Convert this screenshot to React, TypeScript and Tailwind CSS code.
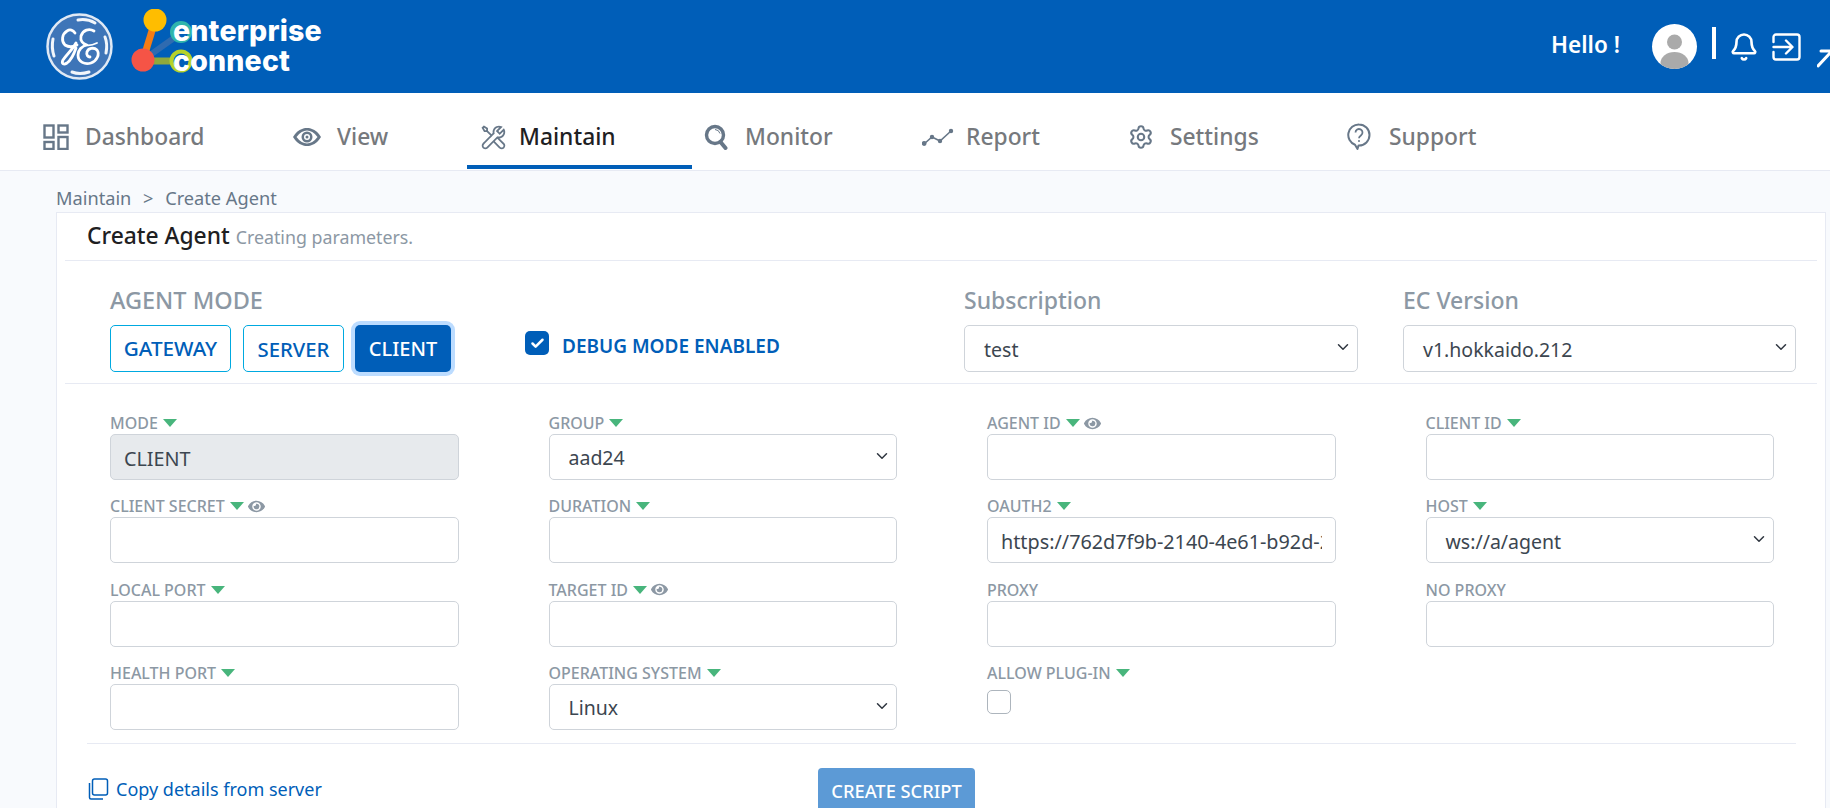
import React from "react";
import { Settings, Bell, ChevronDown, Check } from "lucide-react";
import { FaEye } from "react-icons/fa";
import { LiaToolsSolid } from "react-icons/lia";

const Caret = () => <span className="inline-block ml-[5px] w-0 h-0 border-l-[7.5px] border-r-[7.5px] border-t-[8px] border-l-transparent border-r-transparent border-t-[#48b57c]" />;

const DashboardIcon = () => (
  <svg width="26" height="26" viewBox="0 0 26 26" fill="none" stroke="#677788" strokeWidth="2.4">
    <rect x="1.5" y="1.5" width="9" height="12" /><rect x="15.5" y="1.5" width="9" height="7" />
    <rect x="1.5" y="18" width="9" height="7" /><rect x="15.5" y="13" width="9" height="12" />
  </svg>
);
const ViewIcon = () => (
  <svg width="30" height="20" viewBox="0 0 30 20" fill="none">
    <path d="M1 10C5 3.500 10 1 15 1s10 2.500 14 9c-4 6.500-9 9-14 9S5 16.500 1 10Z" fill="#677788" />
    <path d="M4.500 10C8 5.500 11.500 3.500 15 3.500S22 5.500 25.500 10C22 14.500 18.500 16.500 15 16.500S8 14.500 4.500 10Z" fill="#fff" />
    <circle cx="15" cy="10" r="5.500" fill="#677788" /><circle cx="15" cy="10" r="3" fill="#fff" /><circle cx="15" cy="10" r="1.500" fill="#677788" />
  </svg>
);
const MonitorIcon = () => (
  <svg width="24" height="26" viewBox="0 0 24 26" fill="none">
    <circle cx="11" cy="11" r="8.500" stroke="#677788" strokeWidth="3.400" />
    <path d="M16.500 18l5 6" stroke="#677788" strokeWidth="4" strokeLinecap="round" />
    <path d="M11 5.500a5.500 5.500 0 0 1 5 4" stroke="#677788" strokeWidth="1" />
  </svg>
);
const ReportIcon = () => (
  <svg width="32" height="18" viewBox="0 0 32 18" fill="#677788" stroke="#677788" strokeWidth="1.600">
    <path d="M2 16l8-7 8 4 11-10" fill="none" />
    <circle cx="2.200" cy="15.500" r="1.600" /><circle cx="10" cy="9" r="1.400" /><circle cx="18" cy="13" r="1.400" /><circle cx="29" cy="3" r="1.400" />
  </svg>
);
const SupportIcon = () => (
  <svg width="24" height="28" viewBox="0 0 24 28" fill="none" stroke="#677788" strokeWidth="2">
    <path d="M12 1.500a10.500 10.500 0 0 1 0 21h-.500l-1 3.500-2.500-4.200A10.500 10.500 0 0 1 12 1.500Z" strokeLinejoin="round" />
    <path d="M8.500 9.500a3.500 3.500 0 1 1 5.600 2.800c-1.300 1-2.100 1.500-2.100 3" strokeWidth="1.800" />
    <circle cx="12" cy="18" r=".6" fill="#677788" strokeWidth="1" />
  </svg>
);
const EnterIcon = () => (
  <svg width="29" height="28" viewBox="0 0 29 28" fill="none" stroke="#fff" strokeWidth="2.400" strokeLinecap="round" strokeLinejoin="round">
    <path d="M1.500 9V4a2.500 2.500 0 0 1 2.500-2.500h21A2.500 2.500 0 0 1 27.500 4v20a2.500 2.500 0 0 1-2.500 2.500H4A2.500 2.500 0 0 1 1.500 24v-5" />
    <path d="M1.500 14H20M14 7.500l6.500 6.500-6.500 6.500" />
  </svg>
);
const CopyIcon = () => (
  <svg width="22" height="22" viewBox="0 0 22 22" fill="none" stroke="#005eb8" strokeWidth="1.500">
    <rect x="5.500" y="1" width="15" height="16" rx="2" />
    <path d="M2.500 5v14.500a1.500 1.500 0 0 0 1.500 1.500h12" />
  </svg>
);
const GeLogo = () => (
  <svg width="67" height="67" viewBox="0 0 67 67" fill="none" stroke="#fff" strokeLinecap="round" strokeLinejoin="round">
    <circle cx="33.500" cy="33.500" r="32" fill="#3e75b8" stroke="#dfe9f5" strokeWidth="2.500" />
    <g strokeWidth="2.800">
      <path d="M29 20c-2-3-5-4-8-2-5 3-6 10-2 14 3 2 8 2 12 0" />
      <path d="M30 30c-3 6-9 11-13 17-2 4 1 5 4 3 4-3 7-9 9-15" />
      <path d="M48 18c-5-3-11-1-13 5-1 5 2 8 6 9-5 1-9 5-9 10 0 7 7 10 13 8 6-2 9-9 6-13-3-3-9-2-10 2-1 3 1 5 3 5" />
      <path d="M39 32c4 1 8 0 12-2" strokeWidth="1.800" />
    </g>
    <g strokeWidth="3" stroke="#f2f6fb">
      <path d="M32 7c6-1 12 0 17 3" /><path d="M59 24c2 5 2 11 1 16" /><path d="M43 59c-6 2-12 2-17 0" /><path d="M8 43c-2-6-2-12-1-17" />
    </g>
  </svg>
);
const EcLogo = () => (
  <div className="relative w-[200px] h-[70px] shrink-0">
    <svg className="absolute left-0 top-0" width="80" height="70" viewBox="0 0 80 70" fill="none">
      <path d="M18 51L30 12" stroke="#f57c14" strokeWidth="7" />
      <path d="M18 51L56 24" stroke="#2f6bb0" strokeWidth="6" />
      <path d="M18 52H56" stroke="#8ea83c" strokeWidth="7" />
      <circle cx="30" cy="11" r="11.500" fill="#ffbd00" />
      <circle cx="18" cy="51" r="11.500" fill="#f55446" />
      <circle cx="56" cy="23" r="9" stroke="#2fb5ac" strokeWidth="4" fill="#005eb8" />
      <circle cx="56" cy="52" r="9.500" stroke="#b5d22a" strokeWidth="4" fill="#005eb8" />
    </svg>
    <div className="absolute left-[48px] top-[7px] text-white font-['Inter',sans-serif] font-extrabold text-[28.500px] leading-[29px] tracking-[0.2px]">enterprise</div>
    <div className="absolute left-[48px] top-[37px] text-white font-['Inter',sans-serif] font-extrabold text-[28.500px] leading-[29px] tracking-[0.2px]">connect</div>
  </div>
);

const tabs: { t: string; ic: React.ReactNode; active?: boolean; w: string; iw: string }[] = [
  { t: "Dashboard", ic: <DashboardIcon />, w: "w-[249px]", iw: "w-[42px]" },
  { t: "View", ic: <ViewIcon />, w: "w-[187px]", iw: "w-[45px]" },
  { t: "Maintain", ic: <LiaToolsSolid size={29} color="#677788" />, active: true, w: "w-[225px]", iw: "w-[40px]" },
  { t: "Monitor", ic: <MonitorIcon />, w: "w-[218px]", iw: "w-[41px]" },
  { t: "Report", ic: <ReportIcon />, w: "w-[206px]", iw: "w-[44px]" },
  { t: "Settings", ic: <Settings size={26} color="#677788" strokeWidth={1.900} />, w: "w-[219px]", iw: "w-[42px]" },
  { t: "Support", ic: <SupportIcon />, w: "w-[219px]", iw: "w-[42px]" },
];

const Label = ({ text, caret = true, eye }: { text: string; caret?: boolean; eye?: boolean }) => (
  <div className="h-[22px] flex items-center text-[16px] font-medium text-[#8c98a4] whitespace-nowrap leading-none">
    {text}{caret && <Caret />}{eye && <FaEye className="ml-[4px] text-[#8c98a4]" size={17} />}
  </div>
);
const inputCls = "block w-full h-[46px] border border-[#cfd4da] rounded-[5px] px-[13px] pt-[3px] text-[19.800px] text-[#3c4650] outline-none";
const Field = ({ label, caret, eye, value, disabled }: { label: string; caret?: boolean; eye?: boolean; value?: string; disabled?: boolean }) => (
  <div>
    <Label text={label} caret={caret} eye={eye} />
    <input readOnly disabled={disabled} defaultValue={value} className={inputCls + (disabled ? " bg-[#e7eaed]" : " bg-white")} />
  </div>
);
const Sel = ({ value, cls = "" }: { value: string; cls?: string }) => (
  <div className={"relative " + cls}>
    <div className="h-[46px] border border-[#cfd4da] rounded-[5px] bg-white pl-[19px] pt-[2px] flex items-center text-[19.500px] text-[#3c4650] whitespace-nowrap">{value}</div>
    <ChevronDown className="absolute right-[6px] top-[13px] text-[#2f3640]" size={18} strokeWidth={2} />
  </div>
);
const SelField = ({ label, value }: { label: string; value: string }) => (
  <div><Label text={label} /><Sel value={value} /></div>
);

export default function App() {
  return (
    <div className="w-[1830px] h-[808px] overflow-hidden bg-[#f8fafd] font-['Noto_Sans',sans-serif]">
      <header className="h-[93px] bg-[#005eb8] flex items-center pl-[46px] text-white">
        <GeLogo />
        <div className="ml-[12px] -mt-[6px]"><EcLogo /></div>
        <div className="ml-auto flex items-center w-[279px] shrink-0 overflow-hidden">
          <span className="text-[22.500px] font-semibold w-[101px] shrink-0 -mt-[3px] whitespace-nowrap">Hello !</span>
          <span className="w-[45px] h-[45px] rounded-full bg-white overflow-hidden shrink-0">
            <svg width="45" height="45" viewBox="0 0 45 45" fill="#aaa"><circle cx="22.500" cy="18" r="7.500" /><ellipse cx="22.500" cy="39" rx="14" ry="11" /></svg>
          </span>
          <span className="w-[4px] h-[32px] bg-white ml-[15px] mr-[15px] -mt-[8px] shrink-0" />
          <Bell size={30} strokeWidth={2.100} className="shrink-0 -ml-[2px] mt-[1px]" />
          <span className="ml-[13px] shrink-0 mt-[1px]"><EnterIcon /></span>
          <svg className="ml-[16px] shrink-0 mt-[22px]" width="24" height="20" viewBox="0 0 24 20" fill="none" stroke="#fff" strokeWidth="3" strokeLinecap="round"><path d="M1 18L14 4M4 3h20" /></svg>
        </div>
      </header>
      <nav className="h-[78px] bg-white border-b border-[#e7eaf3] flex pl-[31px]">
        {tabs.map(({ t, ic, active, w, iw }) => (
          <div key={t} className={"h-[76px] flex items-center pt-[16px] pl-[12px] border-b-[4px] shrink-0 " + w + " " + (active ? "border-[#005eb8]" : "border-transparent")}>
            <span className={"flex justify-start shrink-0 " + iw}>{ic}</span>
            <span className={"text-[22.800px] font-medium leading-none " + (active ? "text-[#1e2022]" : "text-[#76797d]")}>{t}</span>
          </div>
        ))}
      </nav>
      <div className="pl-[56px] pr-[4px]">
        <div className="h-[41px] pt-[15px] text-[18.200px] leading-[24px] text-[#677788] whitespace-nowrap">Maintain <span className="mx-[7px]">&gt;</span> Create Agent</div>
        <div className="bg-white border border-[#e7eaf3] h-[600px] pl-[8px] pr-[8px]">
          <div className="h-[48px] border-b border-[#e7eaf3] pl-[22px] flex items-center whitespace-nowrap">
            <span className="text-[22.800px] font-medium text-[#1e2022]">Create Agent</span>
            <span className="text-[17.800px] text-[#8c98a4] ml-[6px] mt-[2px]">Creating parameters.</span>
          </div>
          <div className="h-[123px] border-b border-[#e7eaf3] pl-[45px] flex items-start">
            <div className="w-[415px] shrink-0 pt-[24px]">
              <div className="text-[23.500px] font-medium text-[#8c98a4] leading-[30px] mb-[10px] whitespace-nowrap">AGENT MODE</div>
              <div className="flex">
                <button className="w-[121px] h-[47px] pt-[1px] border border-[#00a9e0] rounded-[5px] text-[20.700px] font-medium text-[#005eb8]">GATEWAY</button>
                <button className="ml-[12px] w-[101px] h-[47px] pt-[1px] border border-[#00a9e0] rounded-[5px] text-[20.300px] font-medium text-[#005eb8]">SERVER</button>
                <button className="ml-[11px] w-[96px] h-[47px] pt-[1px] rounded-[5px] text-[20px] font-medium text-white bg-[#005eb8] ring-4 ring-[#bcdcff]">CLIENT</button>
              </div>
            </div>
            <div className="w-[439px] shrink-0 pt-[70px] flex items-start">
              <span className="w-[24px] h-[24px] rounded-[5px] bg-[#005eb8] flex items-center justify-center"><Check size={15} color="#fff" strokeWidth={4} /></span>
              <span className="ml-[13px] mt-[2px] text-[19px] leading-[26px] font-semibold text-[#005eb8] whitespace-nowrap">DEBUG MODE ENABLED</span>
            </div>
            <div className="w-[394px] shrink-0 pt-[24px]">
              <div className="text-[23px] font-medium text-[#8c98a4] leading-[30px] mb-[10px]">Subscription</div>
              <Sel value="test" cls="[&>div]:h-[47px]" />
            </div>
            <div className="w-[393px] shrink-0 ml-[45px] pt-[24px]">
              <div className="text-[23px] font-medium text-[#8c98a4] leading-[30px] mb-[10px]">EC Version</div>
              <Sel value="v1.hokkaido.212" cls="[&>div]:h-[47px]" />
            </div>
          </div>
          <div className="w-[1664px] ml-[45px] mt-[28px] grid grid-cols-4 gap-x-[90px] gap-y-[15.300px]">
            <Field label="MODE" value="CLIENT" disabled />
            <SelField label="GROUP" value="aad24" />
            <Field label="AGENT ID" eye />
            <Field label="CLIENT ID" />
            <Field label="CLIENT SECRET" eye />
            <Field label="DURATION" />
            <Field label="OAUTH2" value="https://762d7f9b-2140-4e61-b92d-2e1a4f6c9d03.predix-uaa.run.aws-usw02-pr.ice.predix.io/oauth/token" />
            <SelField label="HOST" value="ws://a/agent" />
            <Field label="LOCAL PORT" />
            <Field label="TARGET ID" eye />
            <Field label="PROXY" caret={false} />
            <Field label="NO PROXY" caret={false} />
            <Field label="HEALTH PORT" />
            <SelField label="OPERATING SYSTEM" value="Linux" />
            <div>
              <Label text="ALLOW PLUG-IN" />
              <span className="block mt-[6px] w-[24px] h-[24px] border border-[#adb5bd] rounded-[5px] bg-white" />
            </div>
          </div>
          <div className="ml-[22px] w-[1709px] mt-[13px] border-t border-[#e7eaf3] flex">
            <div className="w-[731px] shrink-0 pt-[32px] flex items-center h-[58px] text-[18px] text-[#005eb8] whitespace-nowrap leading-[24px]">
              <CopyIcon /><span className="ml-[7px]">Copy details from server</span>
            </div>
            <button className="mt-[24px] w-[157px] h-[46px] rounded-[4px] bg-[#5c9ad6] text-white text-[18.300px] font-medium whitespace-nowrap">CREATE SCRIPT</button>
          </div>
        </div>
      </div>
    </div>
  );
}
